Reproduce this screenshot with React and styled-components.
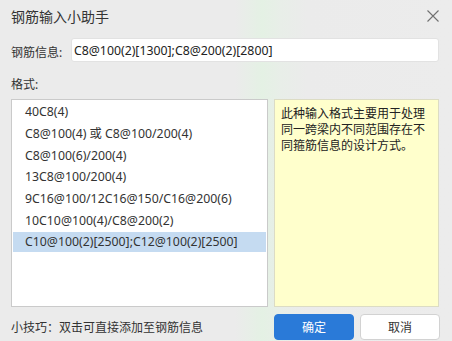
import styled, { createGlobalStyle } from 'styled-components';

const FONT = `"Noto Sans", "Noto Sans CJK SC", sans-serif`;

const formats = [
  '40C8(4)',
  'C8@100(4) 或 C8@100/200(4)',
  'C8@100(6)/200(4)',
  '13C8@100/200(4)',
  '9C16@100/12C16@150/C16@200(6)',
  '10C10@100(4)/C8@200(2)',
  'C10@100(2)[2500];C12@100(2)[2500]',
];

const GlobalStyle = createGlobalStyle`
  html, body {
    margin: 0;
    padding: 0;
  }
  body {
    font-family: ${FONT};
    color: #333;
  }
`;

const CloseIcon = () => (
  <svg width="12" height="12" viewBox="0 0 12 12">
    <path d="M0.5 0.5 L11.5 11.5 M11.5 0.5 L0.5 11.5" stroke="#707070" strokeWidth="1.1" fill="none" />
  </svg>
);

export default function App() {
  const selected = formats.length - 1;
  return (
    <>
      <GlobalStyle />
      <Window>
        <TitleBar>
          <Title>钢筋输入小助手</Title>
          <CloseButton>
            <CloseIcon />
          </CloseButton>
        </TitleBar>

        <InfoRow>
          <Label>钢筋信息:</Label>
          <Input defaultValue="C8@100(2)[1300];C8@200(2)[2800]" />
        </InfoRow>

        <SectionLabel>格式:</SectionLabel>

        <Content>
          <FormatList>
            {formats.map((f, idx) => (
              <FormatItem key={idx} $active={idx === selected}>
                {f}
              </FormatItem>
            ))}
          </FormatList>
          <NoteBox>此种输入格式主要用于处理同一跨梁内不同范围存在不同箍筋信息的设计方式。</NoteBox>
        </Content>

        <Footer>
          <Hint>小技巧：双击可直接添加至钢筋信息</Hint>
          <ButtonGroup>
            <Button $primary>确定</Button>
            <Button>取消</Button>
          </ButtonGroup>
        </Footer>
      </Window>
    </>
  );
}

const Window = styled.div`
  width: 452px;
  height: 341px;
  box-sizing: border-box;
  padding: 0 13px 0 11px;
  background: linear-gradient(
    90deg,
    #ebebeb 0%,
    #ebebeb 52%,
    #e4f1e4 58%,
    #e8eee8 62%,
    #ebebeb 68%,
    #ececec 100%
  );
  display: flex;
  flex-direction: column;
  overflow: hidden;
`;

const TitleBar = styled.div`
  height: 32px;
  display: flex;
  align-items: center;
  justify-content: space-between;
`;

const Title = styled.div`
  font-size: 14px;
  color: #333;
`;

const CloseButton = styled.div`
  display: flex;
  align-items: center;
  justify-content: center;
  width: 12px;
  height: 12px;
`;

const InfoRow = styled.div`
  margin-top: 6px;
  display: flex;
  align-items: center;
  height: 24px;
`;

const Label = styled.div`
  width: 60px;
  font-size: 12px;
  color: #333;
  margin-top: 3px;
`;

const Input = styled.input`
  flex: 1;
  height: 24px;
  box-sizing: border-box;
  border: 1px solid #e2e2e2;
  border-radius: 3px;
  background: #fff;
  padding: 0 2px;
  font-family: ${FONT};
  font-size: 12.3px;
  color: #222;
  outline: none;
`;

const SectionLabel = styled.div`
  margin-top: 13px;
  height: 20px;
  line-height: 20px;
  font-size: 12px;
  color: #333;
`;

const Content = styled.div`
  margin-top: 4px;
  height: 208px;
  display: grid;
  grid-template-columns: 257px 1fr;
  gap: 6px;
`;

const FormatList = styled.div`
  box-sizing: border-box;
  background: #fff;
  border: 1px solid #cacaca;
  padding: 2.4px 1px;
  display: flex;
  flex-direction: column;
  gap: 1.67px;
`;

const FormatItem = styled.div`
  height: 20px;
  line-height: 20px;
  padding-left: 12px;
  font-size: 12.3px;
  color: #333;
  white-space: nowrap;
  background: ${(p) => (p.$active ? '#c5dbf1' : 'transparent')};
`;

const NoteBox = styled.div`
  box-sizing: border-box;
  background: #ffffcc;
  border: 1px solid #dcdcc4;
  padding: 6px 5px 0 6px;
  font-size: 12px;
  line-height: 16px;
  color: #222;
`;

const Footer = styled.div`
  margin-top: 7px;
  height: 26px;
  display: flex;
  align-items: center;
  justify-content: space-between;
`;

const Hint = styled.div`
  font-size: 12px;
  color: #333;
`;

const ButtonGroup = styled.div`
  display: flex;
  gap: 6px;
  margin-right: -1px;
`;

const Button = styled.button`
  width: 80px;
  height: 26px;
  box-sizing: border-box;
  border-radius: 4px;
  font-family: ${FONT};
  font-size: 12px;
  border: 1px solid ${(p) => (p.$primary ? '#2a7ad8' : '#d2d2d2')};
  background: ${(p) => (p.$primary ? '#2a7ad8' : '#fff')};
  color: ${(p) => (p.$primary ? '#fff' : '#333')};
  cursor: pointer;
`;
